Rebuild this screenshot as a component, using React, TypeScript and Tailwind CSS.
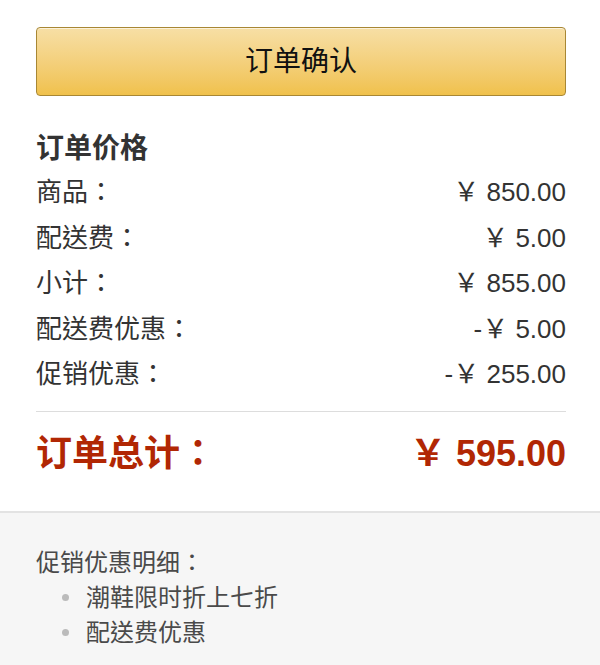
const rows = [
  { label: "商品：", value: "￥ 850.00" },
  { label: "配送费：", value: "￥ 5.00" },
  { label: "小计：", value: "￥ 855.00" },
  { label: "配送费优惠：", value: "-￥ 5.00" },
  { label: "促销优惠：", value: "-￥ 255.00" },
];

const promos = ["潮鞋限时折上七折", "配送费优惠"];

// TC face centres the full-width colon, the way the order page renders it
const font = {
  fontFamily: '"Liberation Sans", Arial, "Noto Sans CJK TC", "Noto Sans CJK SC", sans-serif',
};

export default function App() {
  return (
    <div className="flex min-h-screen flex-col bg-white" style={font}>
      <div className="pt-[27px] pr-[34px] pl-9">
        <button className="flex h-[69px] w-full items-center justify-center rounded-[4px] border border-[#a88734] bg-gradient-to-b from-[#f7dfa5] to-[#f0c14b] text-[28px] text-[#111] shadow-[inset_0_1px_0_rgba(255,255,255,0.6)]">
          订单确认
        </button>

        <h2 className="mt-[35px] mb-[3px] text-[28px] leading-[36px] font-bold text-[#333]">
          订单价格
        </h2>

        <div className="text-[26px] leading-[45.5px] text-[#333]">
          {rows.map((row) => (
            <div key={row.label} className="flex items-center justify-between">
              <span>{row.label}</span>
              <span>{row.value}</span>
            </div>
          ))}
        </div>

        <div className="mt-[13px] h-px bg-[#ddd]" />

        <div className="mt-[12px] flex items-center justify-between pb-[27px] text-[36px] leading-[60px] font-bold text-[#b12704]">
          <span>订单总计：</span>
          <span>￥ 595.00</span>
        </div>
      </div>

      <div className="flex-1 border-t-2 border-[#e3e3e3] bg-[#f6f6f6] px-9 pt-[32px] pb-4 text-[24px] leading-[35px] text-[#4a4a4a]">
        <p>促销优惠明细：</p>
        <ul className="pl-[26px]">
          {promos.map((p) => (
            <li key={p} className="flex items-center">
              <span className="mr-[17px] h-[7px] w-[7px] rounded-full bg-[#bbb]" />
              {p}
            </li>
          ))}
        </ul>
      </div>
    </div>
  );
}
